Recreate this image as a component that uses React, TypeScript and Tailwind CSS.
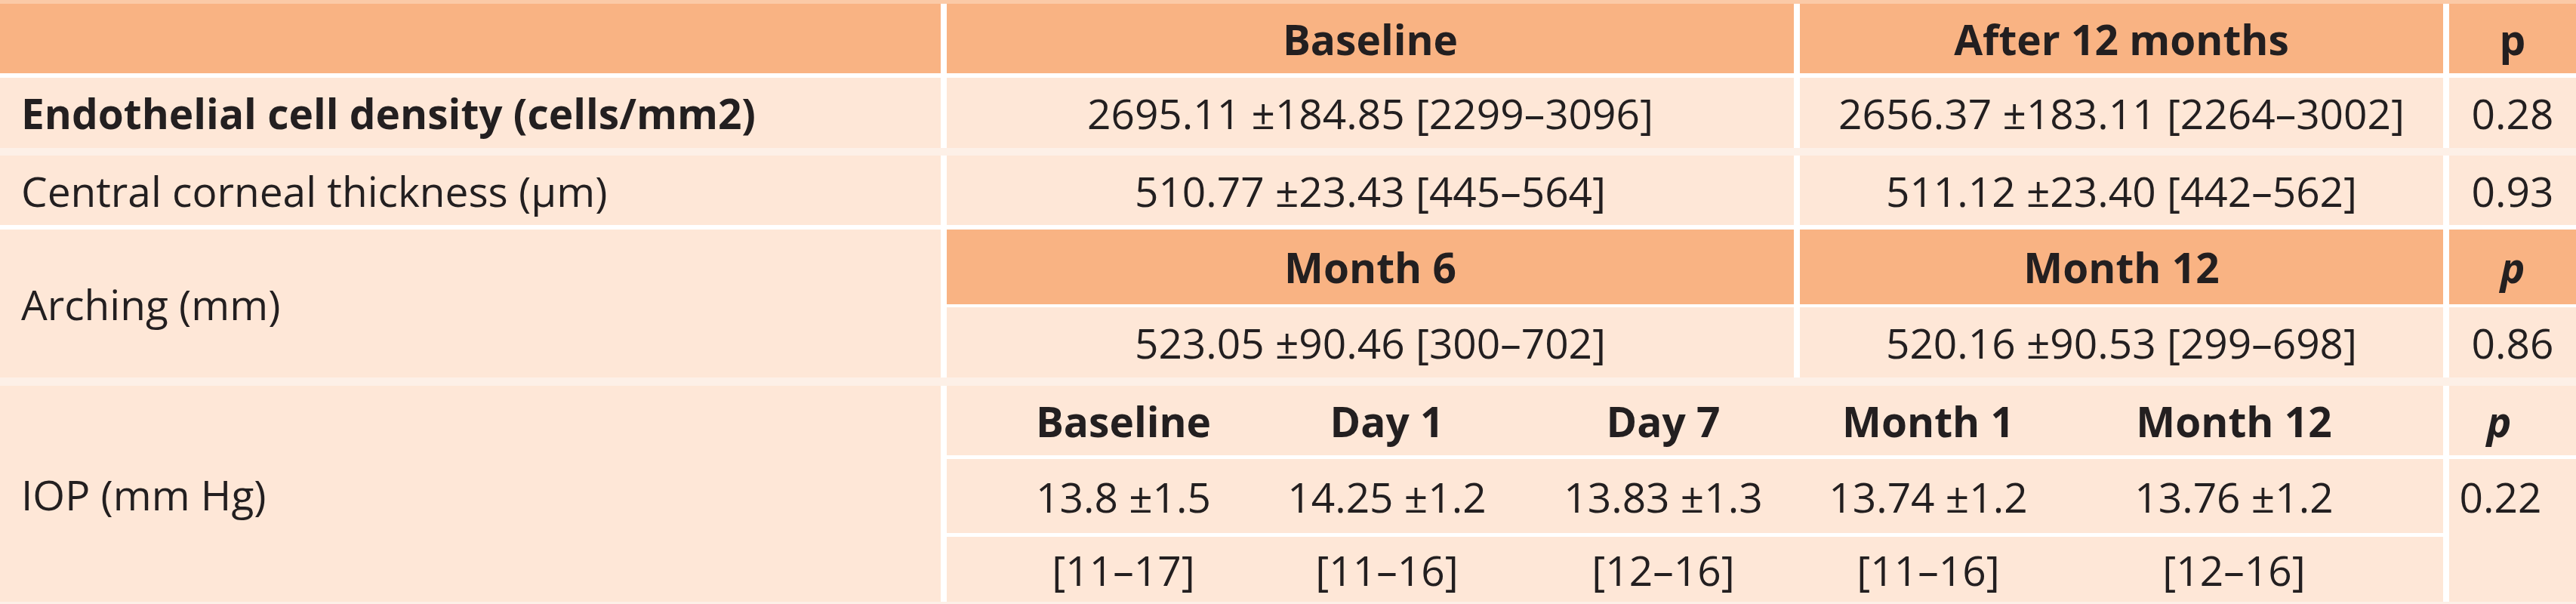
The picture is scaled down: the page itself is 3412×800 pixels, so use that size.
const head = "bg-[#f9b383]";
const body = "bg-[#fee7d7]";
const band = "bg-[#fdf0e7]";
const cols = "grid grid-cols-[1246px_1122px_852px_1fr] gap-x-[8px] bg-white";

const iopHeads = ["Baseline", "Day 1", "Day 7", "Month 1", "Month 12"];
const iopMeans = ["13.8 ±1.5", "14.25 ±1.2", "13.83 ±1.3", "13.74 ±1.2", "13.76 ±1.2"];
const iopRanges = ["[11–17]", "[11–16]", "[12–16]", "[11–16]", "[12–16]"];
// spacing before each IOP sub-column (they are not evenly spread in the source)
const offsets = ["ml-[84px]", "ml-[49px]", "ml-[66px]", "ml-[51px]", "ml-[105px]"];

function SubRow({ items, bold }: { items: string[]; bold?: boolean }) {
  return (
    <div className={`${body} col-span-2 flex items-center ${bold ? "font-bold" : ""}`}>
      {items.map((t, i) => (
        <span key={i} className={`${offsets[i]} w-[300px] shrink-0 text-center whitespace-nowrap`}>
          {t}
        </span>
      ))}
    </div>
  );
}

export default function App() {
  return (
    <div className="w-[3412px] bg-white text-[55px] leading-none text-[#231f20] font-['Open_Sans',sans-serif]">
      <div className="h-[5px] bg-[#fbcaa7]" />

      <div className={`${cols} h-[92px]`}>
        <div className={head} />
        <div className={`${head} flex items-center justify-center font-bold`}>Baseline</div>
        <div className={`${head} flex items-center justify-center font-bold`}>After 12 months</div>
        <div className={`${head} flex items-center justify-center font-bold`}>p</div>
      </div>

      <div className="h-[6px] bg-white" />

      <div className={`${cols} h-[93px]`}>
        <div className={`${body} flex items-center pl-[28px] font-bold`}>Endothelial cell density (cells/mm2)</div>
        <div className={`${body} flex items-center justify-center`}>2695.11 ±184.85 [2299–3096]</div>
        <div className={`${body} flex items-center justify-center`}>2656.37 ±183.11 [2264–3002]</div>
        <div className={`${body} flex items-center justify-center`}>0.28</div>
      </div>

      <div className={`h-[10px] ${band}`} />

      <div className={`${cols} h-[92px]`}>
        <div className={`${body} flex items-center pl-[28px]`}>Central corneal thickness (µm)</div>
        <div className={`${body} flex items-center justify-center`}>510.77 ±23.43 [445–564]</div>
        <div className={`${body} flex items-center justify-center`}>511.12 ±23.40 [442–562]</div>
        <div className={`${body} flex items-center justify-center`}>0.93</div>
      </div>

      <div className="h-[6px] bg-white" />

      <div className={`${cols} grid-rows-[99px_93px] gap-y-[4px]`}>
        <div className={`${body} row-span-2 flex items-center pl-[28px]`}>Arching (mm)</div>
        <div className={`${head} flex items-center justify-center font-bold`}>Month 6</div>
        <div className={`${head} flex items-center justify-center font-bold`}>Month 12</div>
        <div className={`${head} flex items-center justify-center font-bold italic`}>p</div>
        <div className={`${body} flex items-center justify-center`}>523.05 ±90.46 [300–702]</div>
        <div className={`${body} flex items-center justify-center`}>520.16 ±90.53 [299–698]</div>
        <div className={`${body} flex items-center justify-center`}>0.86</div>
      </div>

      <div className={`h-[11px] ${band}`} />

      <div className={`${cols} grid-rows-[92px_98px_86px] gap-y-[5px]`}>
        <div className={`${body} row-span-3 flex items-center pl-[28px]`}>IOP (mm Hg)</div>
        <SubRow items={iopHeads} bold />
        <div className={`${body} flex items-center justify-center pr-[36px] font-bold italic`}>p</div>
        <SubRow items={iopMeans} />
        <div className={`${body} row-span-2 flex flex-col`}>
          <div className="flex h-[98px] items-center justify-center pr-[32px]">0.22</div>
        </div>
        <SubRow items={iopRanges} />
      </div>

      <div className={`h-[3px] ${band}`} />
    </div>
  );
}
